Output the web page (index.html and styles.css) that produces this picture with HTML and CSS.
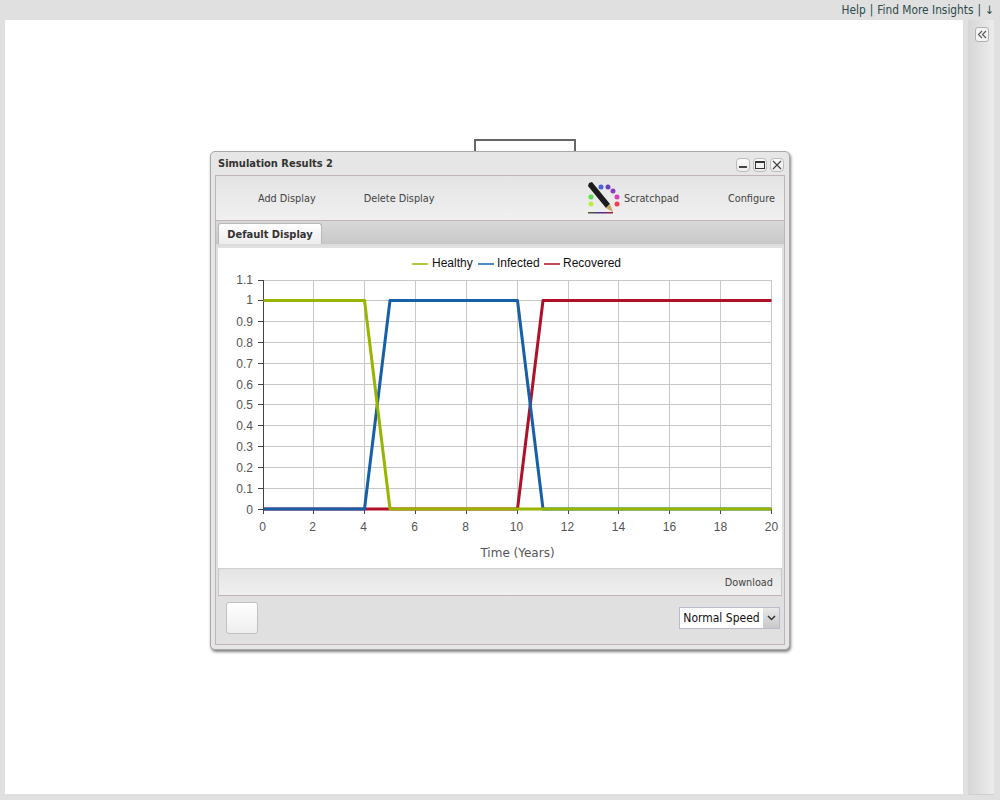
FILE: index.html
```html
<!DOCTYPE html>
<html lang="en">
<head>
<meta charset="utf-8">
<title>Simulation Results</title>
<link rel="stylesheet" href="styles.css">
</head>
<body>
<header class="topbar">
  <a class="toplink">Help</a><span class="sep">|</span><a class="toplink">Find More Insights</a><span class="sep">|</span><a class="toplink">↓</a>
</header>
<div class="workspace">
  <main class="canvas">
    <div class="backbox"></div>
    <section class="window">
      <div class="titlebar">
        <span class="title">Simulation Results 2</span>
        <div class="winbtns">
          <button class="winbtn"><svg width="12" height="12" viewBox="0 0 12 12"><rect x="2" y="7" width="8" height="2" fill="#444"/></svg></button>
          <button class="winbtn"><svg width="12" height="12" viewBox="0 0 12 12"><rect x="1.500" y="2.500" width="9" height="7" fill="none" stroke="#333"/><rect x="1" y="2" width="10" height="2" fill="#333"/></svg></button>
          <button class="winbtn"><svg width="12" height="12" viewBox="0 0 12 12"><path d="M2 2l8 8M10 2l-8 8" stroke="#444" stroke-width="1.200" fill="none"/></svg></button>
        </div>
      </div>
      <div class="frame">
        <div class="toolbar">
          <span class="tool tool-add">Add Display</span>
          <span class="tool tool-del">Delete Display</span>
          <svg class="padicon" width="34" height="34" viewBox="0 0 34 34">
            <defs>
              <linearGradient id="padline">
                <stop offset="0" stop-color="#506020"/>
                <stop offset=".5" stop-color="#4a3090"/>
                <stop offset="1" stop-color="#a02030"/>
              </linearGradient>
            </defs>
            <circle cx="4" cy="16" r="2.500" fill="#55e04a"/>
            <circle cx="4" cy="23" r="2.500" fill="#b4f23c"/>
            <circle cx="14" cy="6" r="2.500" fill="#4a62d8"/>
            <circle cx="21" cy="6" r="2.500" fill="#6a40c0"/>
            <circle cx="26" cy="10" r="2.500" fill="#8a3cc0"/>
            <circle cx="30" cy="16" r="2.500" fill="#d040c0"/>
            <circle cx="30" cy="23" r="2.500" fill="#f04050"/>
            <path d="M1 5l1-3 3-1 18 22-4 4z" fill="#1c1c1c"/>
            <path d="M19 27l4-4 3 8z" fill="#c8a860"/>
            <rect x="1" y="31" width="25" height="1.500" fill="url(#padline)"/>
          </svg>
          <span class="tool tool-pad">Scratchpad</span>
          <span class="tool tool-conf">Configure</span>
        </div>
        <div class="tabstrip"><span class="tab">Default Display</span></div>
        <div class="pane">
          <svg class="chart" width="564" height="320" viewBox="218 248 564 320">
            <g class="grid">
              <path d="M263.500 280.500H771.500M263.500 300.500H771.500M263.500 321.500H771.500M263.500 342.500H771.500M263.500 363.500H771.500M263.500 384.500H771.500M263.500 404.500H771.500M263.500 425.500H771.500M263.500 446.500H771.500M263.500 467.500H771.500M263.500 488.500H771.500"/>
              <path d="M313.500 280V509M364.500 280V509M415.500 280V509M466.500 280V509M517.500 280V509M568.500 280V509M618.500 280V509M669.500 280V509M720.500 280V509M771.500 280V509"/>
            </g>
            <path class="axis" d="M263.500 280V514M258 280.500H263.500M258 300.500H263.500M258 321.500H263.500M258 342.500H263.500M258 363.500H263.500M258 384.500H263.500M258 404.500H263.500M258 425.500H263.500M258 446.500H263.500M258 467.500H263.500M258 488.500H263.500M258 509.500H771.500M313.500 509V514M364.500 509V514M415.500 509V514M466.500 509V514M517.500 509V514M568.500 509V514M618.500 509V514M669.500 509V514M720.500 509V514M771.500 509V514"/>
            <g class="ylab">
              <text x="253" y="284">1.1</text><text x="253" y="304">1</text><text x="253" y="326">0.9</text><text x="253" y="347">0.8</text><text x="253" y="368">0.7</text><text x="253" y="389">0.6</text><text x="253" y="409">0.5</text><text x="253" y="430">0.4</text><text x="253" y="451">0.3</text><text x="253" y="472">0.2</text><text x="253" y="493">0.1</text><text x="253" y="514">0</text>
            </g>
            <g class="xlab">
              <text x="262.500" y="531">0</text><text x="312.500" y="531">2</text><text x="363.500" y="531">4</text><text x="414.500" y="531">6</text><text x="465.500" y="531">8</text><text x="516.500" y="531">10</text><text x="567.500" y="531">12</text><text x="618.500" y="531">14</text><text x="669.500" y="531">16</text><text x="720.500" y="531">18</text><text x="771.500" y="531">20</text>
            </g>
            <text class="xtitle" x="517.500" y="557">Time (Years)</text>
            <polyline class="line recovered" points="263.500,509 517.500,509 543,300.500 771.500,300.500"/>
            <polyline class="line infected" points="263.500,509 364.500,509 390,300.500 517.500,300.500 543,509 771.500,509"/>
            <polyline class="line healthy" points="263.500,300.500 364.500,300.500 390,509 771.500,509"/>
            <g class="legend">
              <path class="key healthy" d="M412 264H428"/><text x="432" y="267">Healthy</text>
              <path class="key infected" d="M478 264H494"/><text x="497" y="267">Infected</text>
              <path class="key recovered" d="M544 264H560"/><text x="563" y="267">Recovered</text>
            </g>
          </svg>
          <div class="downloadbar"><span class="tool">Download</span></div>
        </div>
        <div class="controls">
          <button class="playbtn"></button>
          <div class="speed"><span class="speed-val">Normal Speed</span><span class="speed-arrow"><svg width="9" height="6" viewBox="0 0 9 6"><path d="M1 1l3.500 3.500L8 1" fill="none" stroke="#333" stroke-width="1.500"/></svg></span></div>
        </div>
      </div>
    </section>
  </main>
  <aside class="sidebar">
    <button class="collapse"><svg width="11" height="9" viewBox="0 0 11 9"><path d="M5 1L1.500 4.500 5 8M9 1L5.500 4.500 9 8" fill="none" stroke="#555" stroke-width="1.100"/></svg></button>
  </aside>
</div>
</body>
</html>
```

FILE: styles.css
```css
* { box-sizing: border-box; }
html, body { height: 100%; }
body {
  margin: 0;
  width: 1000px;
  height: 800px;
  overflow: hidden;
  background: #e0e0e0;
  font-family: "DejaVu Sans Condensed", "DejaVu Sans", sans-serif;
  font-stretch: condensed;
  display: flex;
  flex-direction: column;
}
.topbar {
  height: 20px;
  flex: none;
  display: flex;
  justify-content: flex-end;
  align-items: center;
  padding-right: 6px;
  gap: 4px;
  font-size: 11.800px;
  color: #2c4a4a;
}
.workspace {
  height: 775px;
  flex: none;
  display: flex;
  align-items: flex-start;
  padding-left: 5px;
}
.canvas {
  position: relative;
  width: 958px;
  height: 774px;
  background: #fff;
}
.sidebar {
  width: 26px;
  height: 775px;
  margin-left: 5px;
  background: linear-gradient(to right, #d6d6d6, #ececec);
  border-bottom: 1px solid #d0d0d0;
  padding: 7px 0 0 7px;
}
.collapse {
  display: flex;
  align-items: center;
  justify-content: center;
  width: 14px;
  height: 15px;
  padding: 0;
  background: #f4f4f4;
  border: 1px solid #b0b0b0;
  border-radius: 3px;
}
.backbox {
  position: absolute;
  left: 469px;
  top: 119px;
  width: 102px;
  height: 40px;
  border: 2px solid #666;
}
.window {
  position: absolute;
  left: 205px;
  top: 131px;
  width: 580px;
  height: 499px;
  background: #e6e6e6;
  border: 1px solid #a8a8a8;
  border-radius: 5px;
  box-shadow: 1px 2px 3px rgba(0,0,0,.5);
  padding: 0 4px 4px 4px;
  display: flex;
  flex-direction: column;
}
.titlebar {
  height: 23px;
  flex: none;
  display: flex;
  align-items: center;
  justify-content: space-between;
  padding: 0 1px 0 3px;
}
.title {
  font-size: 11px;
  font-weight: 700;
  color: #333;
}
.winbtns { display: flex; gap: 3px; margin-top: 3px; }
.winbtn {
  width: 14px;
  height: 14px;
  padding: 0;
  display: flex;
  align-items: center;
  justify-content: center;
  background: linear-gradient(#fafafa, #ececec);
  border: 1px solid #bcbcbc;
  border-radius: 4px;
}
.frame {
  flex: 1;
  display: flex;
  flex-direction: column;
  border: 1px solid #c0b4b4;
  background: #e0e0e0;
}
.toolbar {
  height: 45px;
  flex: none;
  display: flex;
  align-items: center;
  background: linear-gradient(#e4e4e4, #f0f0f0);
  border-bottom: 1px solid #c0b4b4;
}
.tool { font-size: 10.800px; color: #444; white-space: nowrap; }
.tool-add { margin-left: 42px; }
.tool-del { margin-left: 48px; }
.padicon { margin-left: auto; flex: none; margin-top: 0; }
.tool-pad { margin-left: 3px; }
.tool-conf { margin-left: 49px; margin-right: 9px; }
.tabstrip {
  height: 25px;
  flex: none;
  display: flex;
  align-items: flex-end;
  padding-left: 2px;
  background: linear-gradient(#d8d8d8, #c8c8c8);
  border-bottom: 2px solid #dcdcdc;
}
.tab {
  height: 21px;
  width: 104px;
  display: flex;
  align-items: center;
  justify-content: center;
  background: linear-gradient(#fff, #ececec);
  border: 1px solid #b8b8b8;
  border-bottom: none;
  border-radius: 3px 3px 0 0;
  font-size: 11px;
  font-weight: 700;
  color: #333;
}
.pane {
  margin: 2px 2px 0;
  display: flex;
  flex-direction: column;
  background: #fff;
}
.chart { display: block; }
.grid path { fill: none; stroke: #c8c8c8; stroke-width: 1; }
.axis { fill: none; stroke: #444; stroke-width: 1; }
.ylab text, .xlab text {
  font-family: "Liberation Sans", Arial, sans-serif;
  font-stretch: normal;
  font-size: 12px;
  fill: #555;
}
.ylab text { text-anchor: end; }
.xlab text, .xtitle { text-anchor: middle; }
.xtitle { font-family: "DejaVu Sans", sans-serif; font-stretch: normal; font-size: 12px; fill: #555; }
.line { fill: none; stroke-width: 3; stroke-linejoin: round; }
.healthy { stroke: #9ab500; }
.infected { stroke: #1560a8; }
.recovered { stroke: #b01028; }
.key { fill: none; stroke-width: 1.500; }
.legend text {
  font-family: "Liberation Sans", Arial, sans-serif;
  font-stretch: normal;
  font-size: 12px;
  fill: #111;
}
.downloadbar {
  height: 28px;
  display: flex;
  align-items: center;
  justify-content: flex-end;
  padding-right: 8px;
  background: linear-gradient(#e4e4e4, #f0f0f0);
  border-top: 1px solid #d0d0d0;
  border-bottom: 1px solid #c0b4b4;
  border-left: 1px solid #c8c8c8;
  border-right: 1px solid #c8c8c8;
}
.controls {
  flex: 1;
  display: flex;
  align-items: flex-start;
  justify-content: space-between;
  padding: 6px 4px 0 10px;
}
.playbtn {
  width: 32px;
  height: 32px;
  padding: 0;
  background: linear-gradient(#fff, #eee);
  border: 1px solid #c0c0c0;
  border-radius: 3px;
}
.speed {
  display: flex;
  height: 22px;
  margin-top: 5px;
  border: 1px solid #b8bccc;
  font-size: 12px;
  color: #111;
}
.speed-val {
  width: 83px;
  display: flex;
  align-items: center;
  justify-content: center;
  white-space: nowrap;
  background: #fff;
}
.speed-arrow {
  width: 16px;
  display: flex;
  align-items: center;
  justify-content: center;
  background: linear-gradient(#e8e8e8, #c8c8c8);
}
```
